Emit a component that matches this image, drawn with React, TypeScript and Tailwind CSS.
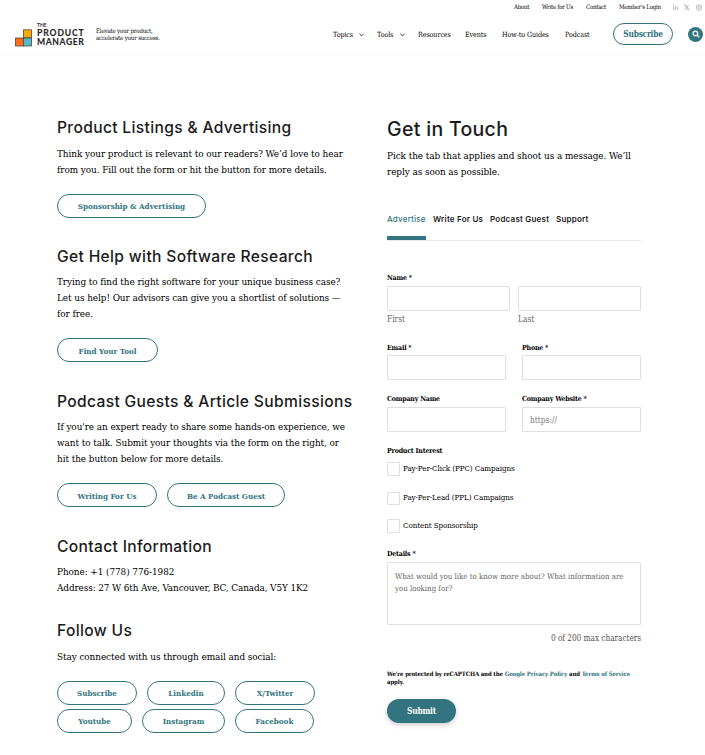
import type { ReactNode } from 'react';

const serif = "font-['DejaVu_Serif_Condensed','DejaVu_Serif',serif] [font-stretch:condensed]";
const teal = 'text-[#327480]';

function Heading({ children, className = '' }: { children: ReactNode; className?: string }) {
  return (
    <h2 className={`h-5 font-['Inter',sans-serif] text-[15.6px] leading-[21px] font-medium tracking-[0.34px] text-[#1b1b1b] ${className}`}>
      {children}
    </h2>
  );
}

function Copy({ children, className = '' }: { children: ReactNode; className?: string }) {
  return <p className={`text-[9.9px] leading-4 tracking-[-0.07px] text-black ${className}`}>{children}</p>;
}

function Pill({ children, className = '' }: { children: ReactNode; className?: string }) {
  return (
    <button className={`flex h-6 shrink-0 items-center justify-center rounded-full border border-[#327480] text-[8px] font-bold tracking-[-0.02px] ${teal} ${className}`}>
      {children}
    </button>
  );
}

function Label({ children, className = '' }: { children: ReactNode; className?: string }) {
  return <label className={`block h-[10px] text-[7px] leading-[11px] font-bold tracking-[-0.2px] text-black ${className}`}>{children}</label>;
}

function Box({ className = '', children }: { className?: string; children?: ReactNode }) {
  return <div className={`rounded-[1px] border border-[#dfdfdf] bg-white ${className}`}>{children}</div>;
}

function Chevron() {
  return (
    <svg width="5" height="4" viewBox="0 0 5 4" fill="none" stroke="#333" strokeWidth="1">
      <path d="M0.4 0.8 2.5 2.9 4.6 0.8" />
    </svg>
  );
}

function Logo() {
  return (
    <div className="flex h-6 w-[70px] items-end gap-[5px]">
      <svg className="mb-[-1px]" width="17" height="18" viewBox="0 0 17 18" stroke="#4b4b45" strokeWidth="0.8">
        <rect x="8.5" y="0.8" width="8" height="8" fill="#ffa800" />
        <rect x="0.5" y="9" width="8" height="8" fill="#ff6b18" />
        <rect x="8.5" y="9" width="8" height="8" fill="#55b9c9" />
      </svg>
      <div className="mb-[-1px] font-['Lato',sans-serif] font-black text-[#292929]">
        <div className="h-[6px] text-[5px] leading-[5px] font-bold">THE</div>
        <div className="h-[9px] text-[8.6px] leading-[9px] tracking-[0.85px]">PRODUCT</div>
        <div className="h-[9px] text-[8.6px] leading-[9px] tracking-[0.57px]">MANAGER</div>
      </div>
    </div>
  );
}

function Header() {
  return (
    <header className="h-[56px] border-b border-[#fafafa]">
      <div className="flex h-[14px] items-center pl-[514px] text-[6.1px] leading-[10px] tracking-[-0.25px] whitespace-nowrap text-black">
        <span className="w-7">About</span>
        <span className="w-11">Write for Us</span>
        <span className="w-[33px]">Contact</span>
        <span className="w-[53px]">Member's Login</span>
        <svg width="31" height="7" viewBox="0 0 31 7" fill="none" stroke="#bdbdbd" strokeWidth="1">
          <path d="M1.5 2.6v3.6M1.5 0.6v1.1M3.4 6.2V2.6M3.4 4Q3.4 2.9 4.5 2.9T5.6 4v2.2" />
          <path d="M12.5 0.8h1.2l3.3 5.2h-1.2zM17 0.8l-4.5 5.2" />
          <rect x="24.5" y="1" width="5" height="5" rx="1.3" />
          <circle cx="27" cy="3.5" r="1.1" />
        </svg>
      </div>
      <div className="flex h-10 items-center pl-[15px] whitespace-nowrap">
        <Logo />
        <p className="ml-[11px] w-[237px] text-[6.1px] leading-[7px] tracking-[-0.18px] text-black">
          Elevate your product,
          <br />
          accelerate your success.
        </p>
        <nav className="flex w-[280px] items-center pt-[2px] text-[7.1px] tracking-[-0.08px] text-black">
          <span className="w-[26px]">Topics</span>
          <span className="w-[18px]"><Chevron /></span>
          <span className="w-[23px]">Tools</span>
          <span className="w-[18px]"><Chevron /></span>
          <span className="w-[47px]">Resources</span>
          <span className="w-[37px]">Events</span>
          <span className="w-[63px]">How-to Guides</span>
          <span>Podcast</span>
        </nav>
        <button className={`h-[22px] w-[60px] rounded-full border border-[#327480] text-[8.3px] font-bold tracking-[-0.25px] ${teal}`}>Subscribe</button>
        <span className="ml-[15px] flex size-[15px] items-center justify-center rounded-full bg-[#327480]">
          <svg width="8" height="8" viewBox="0 0 8 8" fill="none" stroke="white" strokeWidth="1.3">
            <circle cx="3.4" cy="3.4" r="2.3" />
            <path d="m5.1 5.1 2.2 2.2" />
          </svg>
        </span>
      </div>
    </header>
  );
}

function Info() {
  return (
    <section className="w-[330px] whitespace-nowrap">
      <Heading className="tracking-[0.4px]">Product Listings &amp; Advertising</Heading>
      <Copy className="mt-[9px]">
        Think your product is relevant to our readers? We’d love to hear
        <br />
        from you. Fill out the form or hit the button for more details.
      </Copy>
      <Pill className="mt-4 w-[149px]">Sponsorship &amp; Advertising</Pill>

      <Heading className="mt-7">Get Help with Software Research</Heading>
      <Copy className="mt-2">
        Trying to find the right software for your unique business case?
        <br />
        Let us help! Our advisors can give you a shortlist of solutions —
        <br />
        for free.
      </Copy>
      <Pill className="mt-4 w-[101px] pt-px">Find Your Tool</Pill>

      <Heading className="mt-[29px]">Podcast Guests &amp; Article Submissions</Heading>
      <Copy className="mt-2">
        If you're an expert ready to share some hands-on experience, we
        <br />
        want to talk. Submit your thoughts via the form on the right, or
        <br />
        hit the button below for more details.
      </Copy>
      <div className="mt-4 flex gap-[10px]">
        <Pill className="w-[100px] pt-px">Writing For Us</Pill>
        <Pill className="w-[118px] pt-px">Be A Podcast Guest</Pill>
      </div>

      <Heading className="mt-[29px]">Contact Information</Heading>
      <Copy className="mt-2">
        Phone: +1 (778) 776-1982
        <br />
        <span className="tracking-[-0.11px]">Address: 27 W 6th Ave, Vancouver, BC, Canada, V5Y 1K2</span>
      </Copy>

      <Heading className="mt-6">Follow Us</Heading>
      <Copy className="mt-[9px]">Stay connected with us through email and social:</Copy>
      <div className="mt-4 flex gap-[10px]">
        <Pill className="w-[80px]">Subscribe</Pill>
        <Pill className="w-[78px]">Linkedin</Pill>
        <Pill className="w-[80px]">X/Twitter</Pill>
      </div>
      <div className="mt-1 flex gap-[10px]">
        <Pill className="w-[75px]">Youtube</Pill>
        <Pill className="w-[83px]">Instagram</Pill>
        <Pill className="w-[79px]">Facebook</Pill>
      </div>
    </section>
  );
}

function Contact() {
  return (
    <section className="w-[254px] whitespace-nowrap">
      <h1 className="h-6 font-['Inter',sans-serif] text-[19.5px] leading-6 font-medium tracking-[0.32px] text-[#1b1b1b]">Get in Touch</h1>
      <Copy className="mt-[7px]">
        Pick the tab that applies and shoot us a message. We’ll
        <br />
        reply as soon as possible.
      </Copy>
      <div className="mt-[33px] flex h-[28px] border-b border-[#e8e8e8] font-['Inter',sans-serif] text-[8px] leading-[13px] font-semibold tracking-[0.22px] text-[#1b1b1b]">
        <span className={`h-[27px] w-[39px] border-b-4 border-[#327480] font-medium ${teal}`}>Advertise</span>
        <span className="ml-[7px] w-[57px]">Write For Us</span>
        <span className="w-[66px]">Podcast Guest</span>
        <span>Support</span>
      </div>
      <form>
        <Label className="mt-[31px]">Name *</Label>
        <div className="mt-1 flex gap-2">
          <div className="w-[123px]">
            <Box className="h-[25px]" />
            <div className="mt-[2px] h-3 text-[8.3px] leading-[13px] text-[#666]">First</div>
          </div>
          <div className="w-[123px]">
            <Box className="h-[25px]" />
            <div className="mt-[2px] h-3 text-[8.3px] leading-[13px] text-[#666]">Last</div>
          </div>
        </div>
        <div className="mt-[17px] flex gap-4">
          <div className="w-[119px]">
            <Label>Email *</Label>
            <Box className="mt-[3px] h-[25px]" />
          </div>
          <div className="w-[119px]">
            <Label>Phone *</Label>
            <Box className="mt-[3px] h-[25px]" />
          </div>
        </div>
        <div className="mt-[13px] flex gap-4">
          <div className="w-[119px]">
            <Label>Company Name</Label>
            <Box className="mt-1 h-[25px]" />
          </div>
          <div className="w-[119px]">
            <Label>Company Website *</Label>
            <Box className="mt-1 flex h-[25px] items-center pt-px pl-[7px] text-[8.3px] text-[#777]">https://</Box>
          </div>
        </div>
        <Label className="mt-[13px]">Product Interest</Label>
        {['Pay-Per-Click (PPC) Campaigns', 'Pay-Per-Lead (PPL) Campaigns', 'Content Sponsorship'].map((option, i) => (
          <div key={option} className={`flex h-[14px] items-center gap-[3px] text-[8px] tracking-[-0.1px] text-black ${i === 0 ? 'mt-[7px]' : i === 1 ? 'mt-[15px]' : 'mt-[14px]'}`}>
            <Box className={i === 1 ? 'size-[13px]' : 'h-[14px] w-[13px]'} />
            {option}
          </div>
        ))}
        <Label className="mt-[15px]">Details *</Label>
        <Box className="mt-1 h-[63px] px-[7px] pt-[8px] text-[7.8px] leading-3 text-[#666]">
          What would you like to know more about? What information are
          <br />
          you looking for?
        </Box>
        <div className="mt-[7px] text-right text-[8.3px] leading-3 tracking-[-0.08px] text-[#555]">0 of 200 max characters</div>
        <p className="mt-[26px] text-[6px] leading-2 font-bold tracking-[-0.11px] text-black">
          We're protected by reCAPTCHA and the <a className={teal}>Google Privacy Policy</a> and <a className={teal}>Terms of Service</a>
          <br />
          apply.
        </p>
        <button className="mt-[13px] h-6 w-[69px] rounded-full bg-[#327480] text-[8.3px] font-bold tracking-[-0.2px] text-white shadow-[0_2px_5px_rgba(0,0,0,0.2)]">Submit</button>
      </form>
    </section>
  );
}

export default function App() {
  return (
    <div className={`h-[755px] w-[705px] overflow-hidden bg-white ${serif}`}>
      <Header />
      <main className="flex pt-[61px] pl-[57px]">
        <Info />
        <Contact />
      </main>
    </div>
  );
}
